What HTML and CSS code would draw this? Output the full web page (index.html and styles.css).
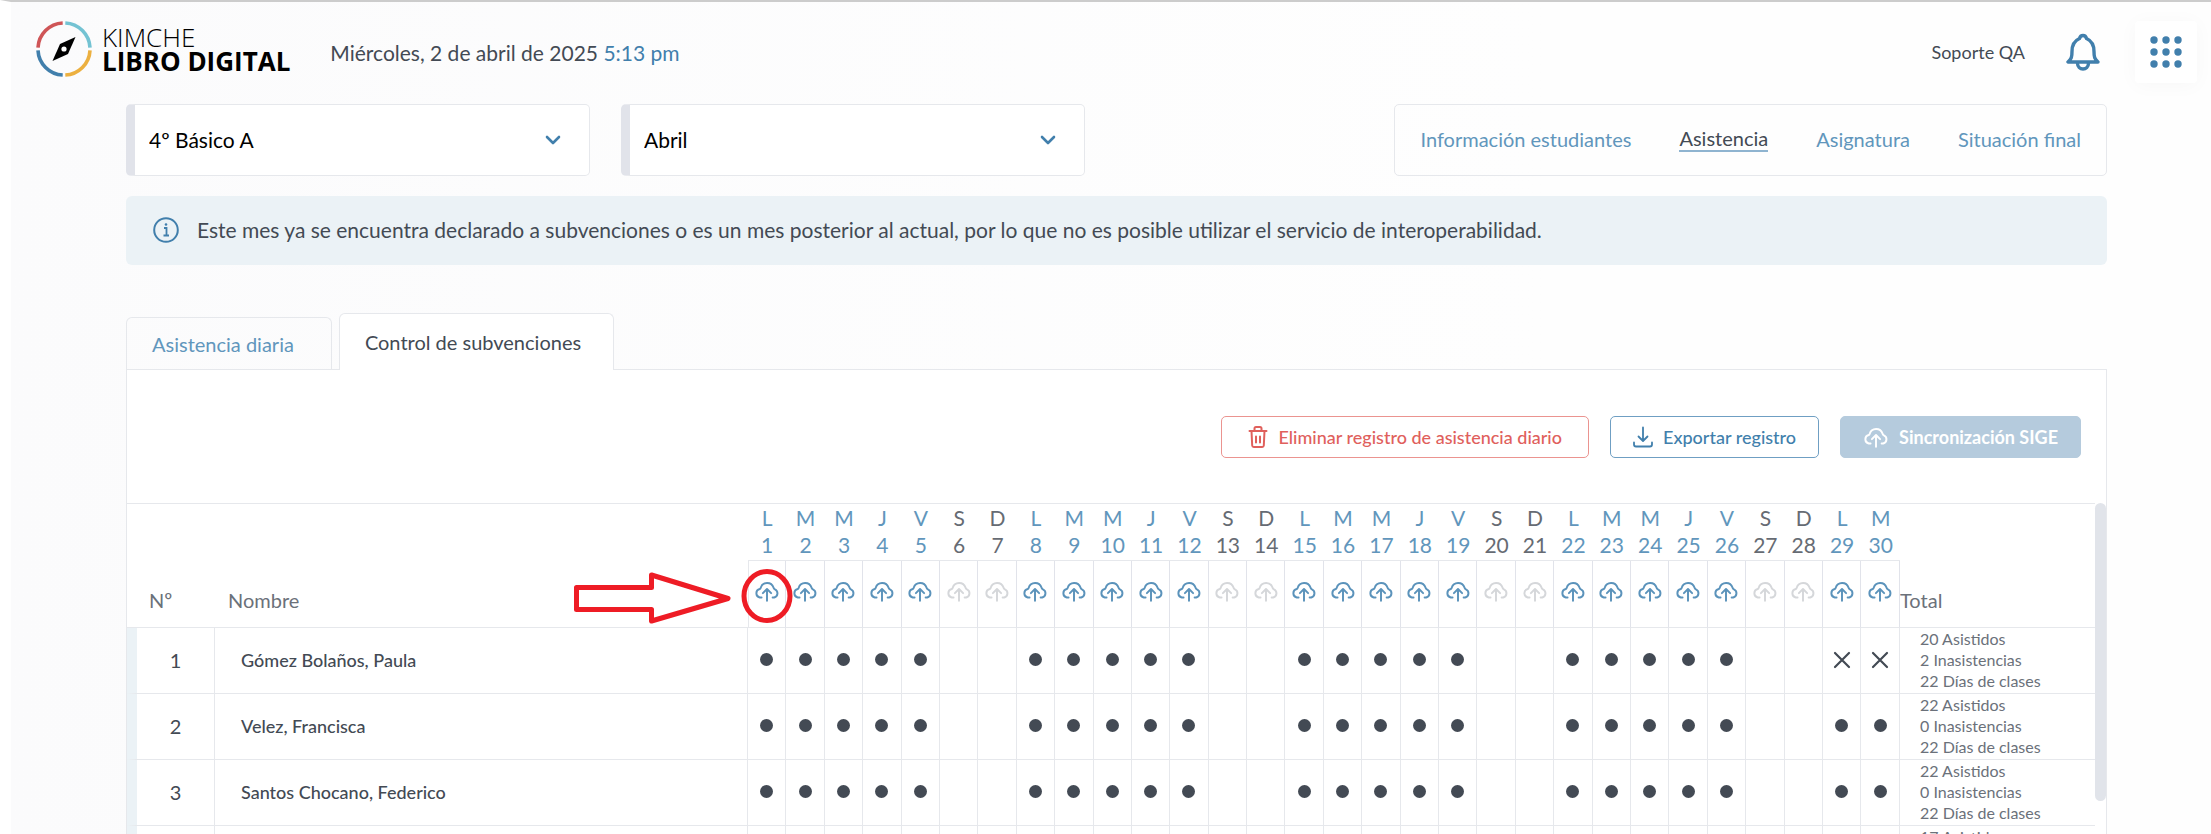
FILE: index.html
```html
<!DOCTYPE html>
<html lang="es">
  <head>
    <meta charset="UTF-8" />
    <meta name="viewport" content="width=device-width, initial-scale=1.0" />
    <title>Kimche Libro Digital</title>
    <link rel="stylesheet" href="styles.css">
  </head>

  <body>
    <svg class="sprite" aria-hidden="true">
      <symbol id="cloud" viewBox="0 0 24 20">
        <path d="M7 16H5.300A4 4 0 0 1 5.300 8.200C5.800 8.200 6 7.800 6.200 7A6.200 6.200 0 0 1 18 6.800C18.200 7.800 18.600 8.200 19.300 8.500A4 4 0 0 1 18.700 16H17.200M12 19V8.500M8.200 12L12 8.200L15.800 12" fill="none" stroke="currentColor" stroke-width="1.800" stroke-linecap="round" stroke-linejoin="round" />
      </symbol>
      <symbol id="chevron" viewBox="0 0 16 10">
        <path d="M2 2l6 6 6-6" fill="none" stroke="currentColor" stroke-width="2.6" stroke-linecap="round" stroke-linejoin="round" />
      </symbol>
    </svg>

    <header class="header">
      <a class="logo" href="#">
        <svg width="56" height="56" viewBox="0 0 56 56" aria-hidden="true">
          <g fill="none" stroke-width="3.6">
            <path d="M2 26.7A26 26 0 0 1 26.7 2" stroke="#cf5557" />
            <path d="M29.3 2A26 26 0 0 1 54 26.7" stroke="#74c3d3" />
            <path d="M54 29.3A26 26 0 0 1 29.3 54" stroke="#ecb040" />
            <path d="M26.7 54A26 26 0 0 1 2 29.3" stroke="#417fac" />
          </g>
          <path d="M39.5 16L32 33L16.500 40L24 23Z" fill="#000" />
          <circle cx="28" cy="28" r="2.600" fill="#fff" />
        </svg>
        <span class="logo-text">
          <span class="logo-top">KIMCHE</span>
          <span class="logo-bottom">LIBRO DIGITAL</span>
        </span>
      </a>
      <p class="date">Miércoles, 2 de abril de 2025 <span class="time">5:13 pm</span></p>
      <span class="user">Soporte QA</span>
      <button class="bell" aria-label="Notificaciones">
        <svg width="34" height="38" viewBox="0 0 34 38" fill="none" stroke="currentColor" stroke-width="3.400" stroke-linejoin="round" stroke-linecap="round">
          <path d="M2 29H32C28.500 26 28 24 28 18.500C28 11 25 7.500 20.500 5.500C19.500 1.500 14.500 1.500 13.500 5.500C9 7.500 6 11 6 18.500C6 24 5.500 26 2 29Z" />
          <path d="M11.500 30C11.500 38 22.500 38 22.500 30" />
        </svg>
      </button>
      <button class="apps" aria-label="Aplicaciones">
        <svg width="32" height="32" viewBox="0 0 32 32" fill="currentColor">
          <circle cx="4" cy="4" r="3.700" /><circle cx="16" cy="4" r="3.700" /><circle cx="28" cy="4" r="3.700" />
          <circle cx="4" cy="16" r="3.700" /><circle cx="16" cy="16" r="3.700" /><circle cx="28" cy="16" r="3.700" />
          <circle cx="4" cy="28" r="3.700" /><circle cx="16" cy="28" r="3.700" /><circle cx="28" cy="28" r="3.700" />
        </svg>
      </button>
    </header>

    <main class="main">
      <div class="filters">
        <div class="select-box">
          <select aria-label="Curso">
            <option>4º Básico A</option>
          </select>
          <svg class="chevron" width="16" height="10"><use href="#chevron" /></svg>
        </div>
        <div class="select-box">
          <select aria-label="Mes">
            <option>Abril</option>
          </select>
          <svg class="chevron" width="16" height="10"><use href="#chevron" /></svg>
        </div>
        <nav class="nav">
          <a href="#">Información estudiantes</a>
          <a href="#" class="active">Asistencia</a>
          <a href="#">Asignatura</a>
          <a href="#">Situación final</a>
        </nav>
      </div>

      <div class="info">
        <svg width="26" height="26" viewBox="0 0 26 26" fill="none" stroke="currentColor" stroke-width="2" aria-hidden="true">
          <circle cx="13" cy="13" r="11.800" />
          <path d="M11 11h2.500v7M10.500 18.500h5.500" stroke-width="1.800" />
          <circle cx="13" cy="7.500" r="1.300" fill="currentColor" stroke="none" />
        </svg>
        <p>Este mes ya se encuentra declarado a subvenciones o es un mes posterior al actual, por lo que no es posible utilizar el servicio de interoperabilidad.</p>
      </div>

      <div class="tabs">
        <button class="tab">Asistencia diaria</button>
        <button class="tab tab-active">Control de subvenciones</button>
      </div>

      <section class="panel">
        <div class="actions">
          <button class="btn btn-red">
            <svg width="20" height="22" viewBox="0 0 20 22" fill="none" stroke="currentColor" stroke-width="2" stroke-linejoin="round" stroke-linecap="round" aria-hidden="true">
              <path d="M1.500 5h17M3.500 5l.7 14.500q.1 1.500 1.600 1.500h8.400q1.500 0 1.600-1.500L16.500 5M6.500 5V2.500Q6.500 1 8 1h4q1.500 0 1.500 1.500V5M8 10.500v6M12 10.500v6" />
            </svg>
            Eliminar registro de asistencia diario
          </button>
          <button class="btn btn-blue">
            <svg width="20" height="22" viewBox="0 0 20 22" fill="none" stroke="currentColor" stroke-width="1.800" stroke-linejoin="round" stroke-linecap="round" aria-hidden="true">
              <path d="M10 1.500v13M5.500 10.500l4.500 4.500 4.500-4.500M1 16.500V18.500Q1 20.500 3 20.500H17Q19 20.500 19 18.500V16.500" />
            </svg>
            Exportar registro
          </button>
          <button class="btn btn-fill" disabled>
            <svg width="26" height="22" aria-hidden="true"><use href="#cloud" /></svg>
            Sincronización SIGE
          </button>
        </div>

        <div class="table-wrap">
          <table class="table">
            <colgroup>
              <col class="col-num">
              <col class="col-name">
              <col span="30">
              <col class="col-total">
            </colgroup>
            <thead>
              <tr id="days">
                <th rowspan="2" class="head-num">Nº</th>
                <th rowspan="2" class="head-name">Nombre</th>
              </tr>
              <tr id="sync"></tr>
            </thead>
            <tbody id="students"></tbody>
          </table>
          <div class="scrollbar"></div>
        </div>
      </section>
    </main>
    <script src="script.js"></script>
  </body>
</html>
```

FILE: styles.css
```css
* {
  box-sizing: border-box;
}

html {
  height: 100%;
  overflow: hidden;
}

body {
  margin: 0;
  height: 100%;
  overflow: hidden;
  border-top: 2px solid #cccccc;
  border-left: 11px solid #fff;
  background: linear-gradient(to right, #fbfbfc, #fefefe 70%);
  font-family: Lato, "Open Sans", sans-serif;
  font-size: 20px;
  color: #434a54;
}

p {
  margin: 0;
}

button {
  font-family: inherit;
  cursor: pointer;
}

a {
  text-decoration: none;
}

.sprite {
  position: absolute;
  width: 0;
  height: 0;
}

/* header */
.header {
  display: flex;
  align-items: center;
  height: 102px;
  padding: 0 14px 2px 25px;
}

.logo {
  display: flex;
  align-items: center;
  gap: 10px;
  margin-bottom: 6px;
  color: #000;
  font-family: "Open Sans", sans-serif;
}

.logo-text {
  display: flex;
  flex-direction: column;
  font-size: 26px;
  line-height: 24px;
}

.logo-top {
  font-weight: 300;
}

.logo-bottom {
  font-weight: 700;
}

.date {
  margin-left: 40px;
  font-size: 21px;
}

.time {
  color: #417fac;
}

.user {
  margin-left: auto;
  font-size: 18px;
}

.bell {
  display: flex;
  margin: 0 35px 0 41px;
  padding: 0;
  border: 0;
  background: none;
  color: #417fac;
}

.apps {
  display: flex;
  align-items: center;
  justify-content: center;
  width: 62px;
  height: 62px;
  padding: 0;
  border: 0;
  border-radius: 4px;
  background: #fff;
  box-shadow: 0 2px 20px rgba(0, 0, 0, 0.03);
  color: #417fac;
}

/* filters */
.main {
  padding: 0 104px 0 115px;
}

.filters {
  display: flex;
  gap: 31px;
  margin-bottom: 20px;
}

.select-box {
  display: grid;
  align-items: center;
  width: 464px;
  height: 72px;
  border: 1px solid #e6e8ec;
  border-left: 9px solid #e1e3ea;
  border-radius: 5px;
  background: #fff;
}

.select-box select,
.chevron {
  grid-area: 1 / 1;
}

.select-box select {
  appearance: none;
  width: 100%;
  height: 100%;
  padding: 0 14px 2px;
  border: 0;
  background: none;
  font-family: inherit;
  font-size: 21px;
  color: #000;
}

.chevron {
  justify-self: end;
  margin-right: 28px;
  color: #417fac;
  pointer-events: none;
}

.nav {
  display: flex;
  align-items: center;
  gap: 48px;
  margin-left: auto;
  padding: 0 25px 2px;
  border: 1px solid #e6e8ec;
  border-radius: 5px;
}

.nav a {
  color: #6196bc;
}

.nav .active {
  color: #434a54;
  border-bottom: 2px solid #8fb4d0;
}

.info {
  display: flex;
  align-items: center;
  gap: 18px;
  height: 69px;
  padding: 0 27px 2px;
  border-radius: 6px;
  background: #ebf2f6;
  font-size: 21px;
}

.info svg {
  color: #417fac;
  flex-shrink: 0;
}

/* tabs */
.tabs {
  display: flex;
  align-items: flex-end;
  gap: 7px;
  margin-top: 48px;
}

.tab {
  height: 52px;
  padding: 0 37px 0 25px;
  border: 1px solid #e6e8ec;
  border-bottom: 0;
  border-radius: 6px 6px 0 0;
  background: none;
  font-size: 20px;
  color: #6196bc;
}

.tab-active {
  height: 57px;
  margin-bottom: -1px;
  padding-right: 32px;
  background: #fff;
  color: #434a54;
  z-index: 1;
}

.panel {
  border: 1px solid #e6e8ec;
  background: #fff;
}

.actions {
  display: flex;
  justify-content: flex-end;
  align-items: center;
  gap: 21px;
  height: 133px;
  padding: 0 25px;
}

.btn {
  display: flex;
  align-items: center;
  gap: 10px;
  height: 42px;
  padding: 0 22px;
  border: 1px solid;
  border-radius: 5px;
  background: #fff;
  font-size: 18px;
  font-weight: 500;
}

.btn-red {
  padding: 0 26px;
  color: #e0605c;
  border-color: #eb9490;
}

.btn-blue {
  color: #417fac;
  border-color: #6f9fc3;
}

.btn-fill {
  color: #fff;
  border-color: #b5cbdd;
  background: #b5cbdd;
  font-weight: 700;
}

/* table */
.table-wrap {
  display: flex;
  align-items: flex-start;
}

.table {
  flex: 1;
  width: 100%;
  table-layout: fixed;
  border-collapse: separate;
  border-spacing: 0;
  border-top: 1px solid #e6e8ec;
}

.col-num {
  width: 88px;
}

.col-name {
  width: 533px;
}

.col-total {
  width: 195px;
}

.scrollbar {
  width: 11px;
  height: 298px;
  border-radius: 6px;
  background: #e1e4ea;
}

th {
  padding: 0;
  font-weight: 400;
  color: #6b717a;
  border-bottom: 1px solid #e6e8ec;
}

.head-num,
.head-name,
.head-total {
  text-align: left;
  vertical-align: bottom;
  line-height: 24px;
  padding-bottom: 15px;
}

.head-num {
  padding-left: 22px;
}

.head-name {
  padding-left: 13px;
}

.day {
  height: 56px;
  padding-bottom: 2px;
  font-size: 21px;
  line-height: 27px;
  color: #6196bc;
}

.day span {
  display: block;
}

.weekend {
  color: #666b73;
}

.sync {
  position: relative;
  height: 67px;
  border-right: 1px solid #e1e3ea;
}

.sync:first-child {
  border-left: 1px solid #e6e8ec;
}

.sync button {
  display: block;
  margin: 0 auto;
  padding: 0 0 6px;
  border: 0;
  background: none;
  color: #5b93bb;
}

.sync button:disabled {
  color: #d5d7da;
}

.sync svg {
  display: block;
  margin: 0 auto;
}

/* red arrow and ring over the first upload button */
.sync .mark {
  position: absolute;
  top: 8px;
  right: -9px;
  pointer-events: none;
}

td {
  height: 66px;
  padding: 0 0 2px;
  border-right: 1px solid #e6e8ec;
  border-bottom: 1px solid #e6e8ec;
  text-align: center;
  color: #434a54;
}

.num {
  border-left: 10px solid #ebf2f6;
}

.name {
  padding-left: 26px;
  font-size: 18px;
  font-weight: 500;
  text-align: left;
}

.total {
  padding-left: 20px;
  border-right: 0;
  font-size: 16px;
  line-height: 21px;
  text-align: left;
  color: #6b717a;
}

.total span {
  display: block;
}

.dot {
  display: block;
  width: 13px;
  height: 13px;
  margin: 0 auto;
  border-radius: 50%;
  background: #434a54;
}

.cross {
  display: block;
  margin: 0 auto;
}
```

FILE: script.js
```js
const letters = ["L", "M", "M", "J", "V", "S", "D"];

const students = [
  { name: "Gómez Bolaños, Paula", absent: [29, 30], total: [20, 2, 22] },
  { name: "Velez, Francisca", absent: [], total: [22, 0, 22] },
  { name: "Santos Chocano, Federico", absent: [], total: [22, 0, 22] },
  { name: "", absent: [], total: [17, 5, 22] },
];

const mark = `
  <svg class="mark" width="222" height="56" viewBox="0 0 222 56" fill="none" stroke="#ee1c25" stroke-width="5" stroke-linejoin="round">
    <path d="M4.500 18.500H79.500V6L156 29.500L79.500 52V40.500H4.500Z" />
    <ellipse cx="195" cy="27" rx="23" ry="24.500" />
  </svg>`;

const cross = `
  <svg class="cross" width="18" height="18" viewBox="0 0 18 18" stroke="#434a54" stroke-width="2.200" stroke-linecap="round">
    <path d="M2 2L16 16M16 2L2 16" />
  </svg>`;

const isWeekend = (day) => (day - 1) % 7 > 4;

let days = ``;
let sync = ``;
for (let i = 1; i <= 30; i++) {
  days += `<th class="day ${isWeekend(i) ? "weekend" : ""}"><span>${letters[(i - 1) % 7]}</span><span>${i}</span></th>`;
  sync += `
    <th class="sync">
      <button aria-label="Sincronizar día ${i}" ${isWeekend(i) ? "disabled" : ""}>
        <svg width="26" height="22"><use href="#cloud" /></svg>
      </button>
      ${i === 1 ? mark : ""}
    </th>`;
}
days += `<th rowspan="2" class="head-total">Total</th>`;

let rows = ``;
students.forEach((student, index) => {
  let cells = ``;
  for (let i = 1; i <= 30; i++) {
    let value = "";
    if (student.absent.includes(i)) {
      value = cross;
    } else if (!isWeekend(i)) {
      value = `<span class="dot"></span>`;
    }
    cells += `<td>${value}</td>`;
  }
  rows += `
    <tr>
      <td class="num">${index + 1}</td>
      <td class="name">${student.name}</td>
      ${cells}
      <td class="total">
        <span>${student.total[0]} Asistidos</span>
        <span>${student.total[1]} Inasistencias</span>
        <span>${student.total[2]} Días de clases</span>
      </td>
    </tr>`;
});

document.getElementById("days").insertAdjacentHTML("beforeend", days);
document.getElementById("sync").innerHTML = sync;
document.getElementById("students").innerHTML = rows;
```
